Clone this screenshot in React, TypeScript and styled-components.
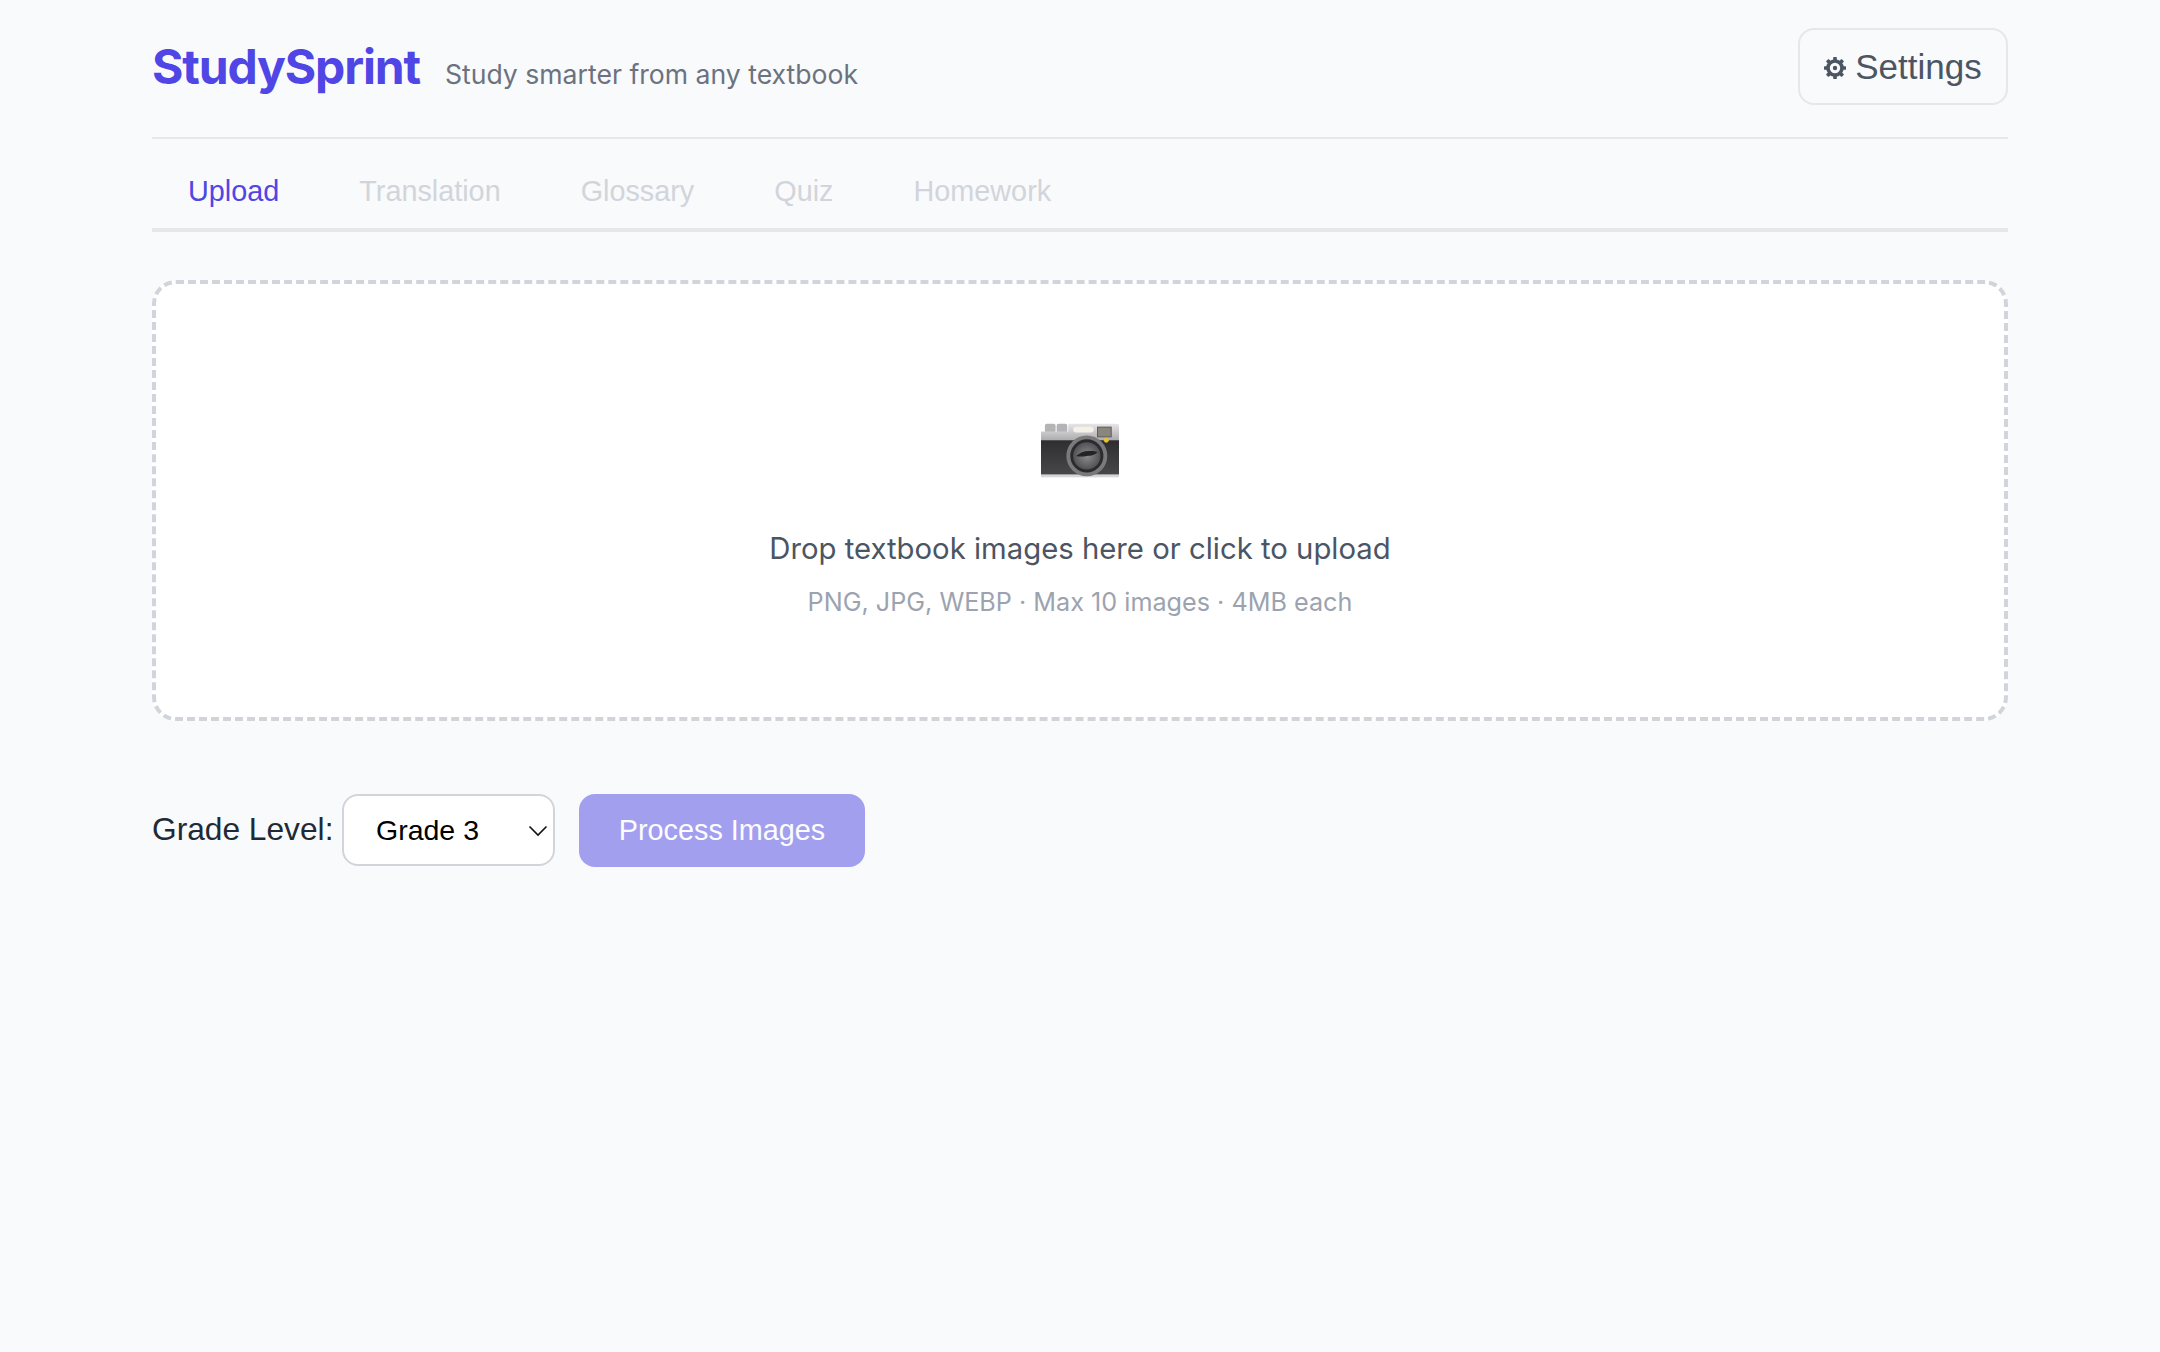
import React from "react";
import styled, { createGlobalStyle } from "styled-components";

const Global = createGlobalStyle`
  html, body { margin: 0; padding: 0; background: #f9fafb; }
  body { font-family: Inter, "Noto Sans", sans-serif; min-height: 1352px; }
`;

const Page = styled.div`
  width: 1856px;
  margin: 0 auto;
  padding-top: 28px;
`;

const Header = styled.header`
  display: flex;
  justify-content: space-between;
  align-items: center;
  padding-bottom: 32px;
  border-bottom: 2px solid #e5e7eb;
`;

const Brand = styled.div`
  display: flex;
  align-items: baseline;
  gap: 25px;
`;

const Title = styled.h1`
  margin: 0;
  font-size: 48px;
  font-weight: 700;
  letter-spacing: -1.15px;
  color: #4f46e5;
`;

const Tagline = styled.span`
  font-size: 26.6px;
  color: #6b7280;
`;

const SettingsButton = styled.button`
  display: flex;
  align-items: center;
  justify-content: center;
  gap: 8px;
  width: 210px;
  height: 77px;
  padding: 0 1px 0 0;
  box-sizing: border-box;
  border: 2px solid #e5e7eb;
  border-radius: 16px;
  background: transparent;
  color: #4b5563;
  font-family: "Liberation Sans", Arial, sans-serif;
  font-size: 35px;
`;

const Gear = styled.svg`
  width: 24px;
  height: 24px;
  margin-top: 2px;
`;

const Tabs = styled.nav`
  display: flex;
  gap: 8px;
  height: 89px;
  border-bottom: 4px solid #e5e7eb;
`;

const Tab = styled.button<{ $active?: boolean }>`
  padding: 16px 36px 0;
  border: none;
  background: none;
  font-family: "Liberation Sans", Arial, sans-serif;
  font-size: 28.8px;
  color: ${(p) => (p.$active ? "#4f46e5" : "#d1d5db")};
`;

const DropZone = styled.section`
  margin-top: 48px;
  height: 441px;
  box-sizing: border-box;
  display: flex;
  flex-direction: column;
  align-items: center;
  border: 4px dashed #d1d5db;
  border-radius: 24px;
  background: #fff;
  padding-top: 139px;
`;

const Camera = styled.svg`
  width: 78px;
  height: 56px;
`;

const DropTitle = styled.p`
  margin: 50px 0 0;
  font-size: 29.3px;
  line-height: 40px;
  color: #4b5563;
`;

const DropHint = styled.p`
  margin: 16px 0 0;
  font-size: 25.2px;
  line-height: 34px;
  color: #9ca3af;
`;

const Controls = styled.div`
  display: flex;
  align-items: flex-start;
  margin-top: 73px;
`;

const Label = styled.label`
  font-family: "Liberation Sans", Arial, sans-serif;
  font-size: 31.7px;
  line-height: 70px;
  color: #1f2937;
  width: 190px;
`;

const SelectWrap = styled.div`
  position: relative;
  width: 213px;
  height: 72px;
`;

const Select = styled.select`
  appearance: none;
  width: 100%;
  height: 100%;
  box-sizing: border-box;
  padding: 0 0 0 32px;
  border: 2px solid #d1d5db;
  border-radius: 16px;
  background: #fff;
  color: #000;
  font-family: "Liberation Sans", Arial, sans-serif;
  font-size: 28.5px;
`;

const Chevron = styled.svg`
  position: absolute;
  right: 7px;
  top: 31px;
  width: 20px;
  height: 12px;
  pointer-events: none;
`;

const ProcessButton = styled.button`
  margin-left: 24px;
  width: 286px;
  height: 73px;
  border: none;
  border-radius: 16px;
  background: #4f46e5;
  opacity: 0.5;
  color: #fff;
  font-family: "Liberation Sans", Arial, sans-serif;
  font-size: 28.8px;
`;

const TEETH = [0, 45, 90, 135, 180, 225, 270, 315];

export default function App() {
  return (
    <>
      <Global />
      <Page>
        <Header>
          <Brand>
            <Title>StudySprint</Title>
            <Tagline>Study smarter from any textbook</Tagline>
          </Brand>
          <SettingsButton>
            <Gear viewBox="0 0 24 24">
              {TEETH.map((a) => (
                <rect key={a} x="10.2" y="1" width="3.6" height="5" rx="0.6" fill="#4b5563" transform={`rotate(${a} 12 12)`} />
              ))}
              <circle cx="12" cy="12" r="7" fill="none" stroke="#4b5563" strokeWidth="3.6" />
              <circle cx="12" cy="12" r="2.2" fill="#4b5563" />
            </Gear>
            Settings
          </SettingsButton>
        </Header>
        <Tabs>
          <Tab $active>Upload</Tab>
          <Tab>Translation</Tab>
          <Tab>Glossary</Tab>
          <Tab>Quiz</Tab>
          <Tab>Homework</Tab>
        </Tabs>
        <DropZone>
          <Camera viewBox="0 0 80 56">
            <defs>
              <linearGradient id="cameraTop" x1="0" y1="0" x2="0" y2="1">
                <stop offset="0" stopColor="#e6e6e8" />
                <stop offset="1" stopColor="#a6a6a9" />
              </linearGradient>
              <linearGradient id="cameraBody" x1="0" y1="0" x2="0" y2="1">
                <stop offset="0" stopColor="#2e2e30" />
                <stop offset="1" stopColor="#48484a" />
              </linearGradient>
              <radialGradient id="cameraGlass" cx="0.5" cy="0.5" r="0.6">
                <stop offset="0" stopColor="#8c8c8e" />
                <stop offset="1" stopColor="#47474b" />
              </radialGradient>
            </defs>
            <rect x="4" y="0" width="11" height="9" rx="2" fill="#b4b4b6" />
            <rect x="16" y="0" width="11" height="9" rx="2" fill="#b4b4b6" />
            <path d="M0 8h28V0h50a2 2 0 0 1 2 2v17H0z" fill="url(#cameraTop)" />
            <rect x="33" y="3" width="21" height="6" rx="3" fill="#f4f1e6" />
            <rect x="58" y="3.5" width="14" height="10" fill="#8a857d" stroke="#5a5a5a" strokeWidth="1" />
            <rect x="0" y="17" width="80" height="36" fill="url(#cameraBody)" />
            <rect x="0" y="52" width="80" height="3" fill="#d6d6d8" />
            <circle cx="67" cy="17" r="2.5" fill="#e8c22e" />
            <circle cx="47" cy="33" r="21" fill="#7a7a7d" />
            <circle cx="47" cy="33" r="17" fill="#2b2b2e" />
            <circle cx="47" cy="33" r="14" fill="url(#cameraGlass)" />
            <path d="M36 33c4-3 8-5 13-5 3 0 6 0 9 1-2 3-7 4-11 4-4 1-8 1-11 0z" fill="#232325" />
          </Camera>
          <DropTitle>Drop textbook images here or click to upload</DropTitle>
          <DropHint>PNG, JPG, WEBP · Max 10 images · 4MB each</DropHint>
        </DropZone>
        <Controls>
          <Label>Grade Level:</Label>
          <SelectWrap>
            <Select defaultValue="3">
              <option value="3">Grade 3</option>
            </Select>
            <Chevron viewBox="0 0 20 12" fill="none" stroke="#111" strokeWidth="1.6">
              <path d="M1.5 1.5l8.5 8.5 8.5-8.5" />
            </Chevron>
          </SelectWrap>
          <ProcessButton disabled>Process Images</ProcessButton>
        </Controls>
      </Page>
    </>
  );
}
